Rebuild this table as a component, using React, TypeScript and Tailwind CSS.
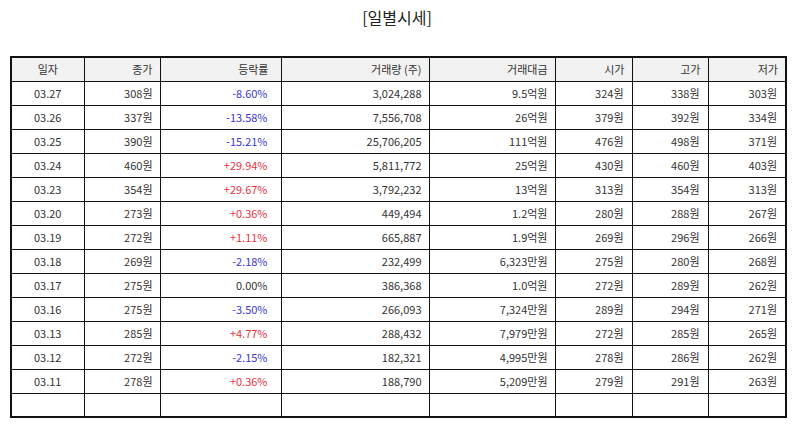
import React from 'react';

type Row = {
  date: string;
  close: string;
  rate: string;
  volume: string;
  amount: string;
  open: string;
  high: string;
  low: string;
};

const ROWS: Row[] = [
  { date: '03.27', close: '308원', rate: '-8.60%', volume: '3,024,288', amount: '9.5억원', open: '324원', high: '338원', low: '303원' },
  { date: '03.26', close: '337원', rate: '-13.58%', volume: '7,556,708', amount: '26억원', open: '379원', high: '392원', low: '334원' },
  { date: '03.25', close: '390원', rate: '-15.21%', volume: '25,706,205', amount: '111억원', open: '476원', high: '498원', low: '371원' },
  { date: '03.24', close: '460원', rate: '+29.94%', volume: '5,811,772', amount: '25억원', open: '430원', high: '460원', low: '403원' },
  { date: '03.23', close: '354원', rate: '+29.67%', volume: '3,792,232', amount: '13억원', open: '313원', high: '354원', low: '313원' },
  { date: '03.20', close: '273원', rate: '+0.36%', volume: '449,494', amount: '1.2억원', open: '280원', high: '288원', low: '267원' },
  { date: '03.19', close: '272원', rate: '+1.11%', volume: '665,887', amount: '1.9억원', open: '269원', high: '296원', low: '266원' },
  { date: '03.18', close: '269원', rate: '-2.18%', volume: '232,499', amount: '6,323만원', open: '275원', high: '280원', low: '268원' },
  { date: '03.17', close: '275원', rate: '0.00%', volume: '386,368', amount: '1.0억원', open: '272원', high: '289원', low: '262원' },
  { date: '03.16', close: '275원', rate: '-3.50%', volume: '266,093', amount: '7,324만원', open: '289원', high: '294원', low: '271원' },
  { date: '03.13', close: '285원', rate: '+4.77%', volume: '288,432', amount: '7,979만원', open: '272원', high: '285원', low: '265원' },
  { date: '03.12', close: '272원', rate: '-2.15%', volume: '182,321', amount: '4,995만원', open: '278원', high: '286원', low: '262원' },
  { date: '03.11', close: '278원', rate: '+0.36%', volume: '188,790', amount: '5,209만원', open: '279원', high: '291원', low: '263원' },
];

const rateColor = (r: string) =>
  r.startsWith('-') ? 'text-[#3a3acf]' : r.startsWith('+') ? 'text-[#e5333f]' : 'text-[#333]';

const cell = 'border border-[#111] h-[24px] p-0 text-[11px] leading-none';

export default function App() {
  return (
    <div
      className="w-[794px] h-[425px] bg-white pt-[5px] text-[#333]"
      style={{ fontFamily: '"Noto Sans CJK KR", "Noto Sans", sans-serif' }}
    >
      <h2 className="text-center text-[16px] leading-[24px] text-[#222] font-normal">[일별시세]</h2>

      <table className="mt-[27px] ml-[10px] w-[775px] table-fixed border-collapse border-2 border-[#111]">
        <colgroup>
          <col className="w-[73px]" />
          <col className="w-[76px]" />
          <col className="w-[121px]" />
          <col className="w-[148px]" />
          <col className="w-[126px]" />
          <col className="w-[77px]" />
          <col className="w-[76px]" />
          <col className="w-[78px]" />
        </colgroup>
        <thead>
          <tr className="bg-[#f2f2f2]">
            <th className={`${cell} font-normal text-center`}>일자</th>
            <th className={`${cell} font-normal text-right pr-[7px]`}>종가</th>
            <th className={`${cell} font-normal text-right pr-[12px]`}>등락률</th>
            <th className={`${cell} font-normal text-right pr-[7px]`}>거래량 (주)</th>
            <th className={`${cell} font-normal text-right pr-[7px]`}>거래대금</th>
            <th className={`${cell} font-normal text-right pr-[7px]`}>시가</th>
            <th className={`${cell} font-normal text-right pr-[7px]`}>고가</th>
            <th className={`${cell} font-normal text-right pr-[7px]`}>저가</th>
          </tr>
        </thead>
        <tbody>
          {ROWS.map((r) => (
            <tr key={r.date}>
              <td className={`${cell} text-center`}>{r.date}</td>
              <td className={`${cell} text-right pr-[7px]`}>{r.close}</td>
              <td className={`${cell} text-right pr-[13px] ${rateColor(r.rate)}`}>{r.rate}</td>
              <td className={`${cell} text-right pr-[7px]`}>{r.volume}</td>
              <td className={`${cell} text-right pr-[7px]`}>{r.amount}</td>
              <td className={`${cell} text-right pr-[8px]`}>{r.open}</td>
              <td className={`${cell} text-right pr-[8px]`}>{r.high}</td>
              <td className={`${cell} text-right pr-[8px]`}>{r.low}</td>
            </tr>
          ))}
          <tr>
            {Array.from({ length: 8 }).map((_, i) => (
              <td key={i} className={`${cell} h-[22px]`} />
            ))}
          </tr>
        </tbody>
      </table>
    </div>
  );
}
